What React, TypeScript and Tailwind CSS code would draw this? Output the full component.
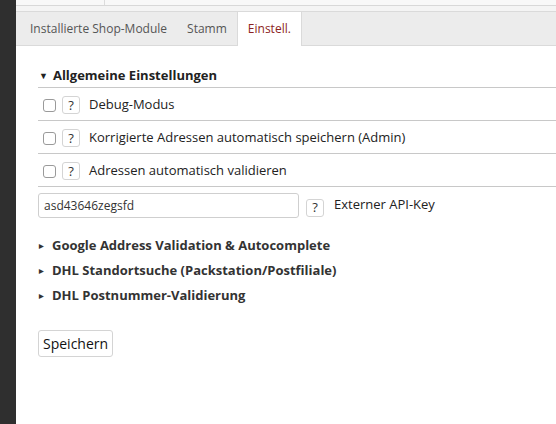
import { useState } from 'react';

type Row = { label: string };

const checkRows: Row[] = [
  { label: 'Debug-Modus' },
  { label: 'Korrigierte Adressen automatisch speichern (Admin)' },
  { label: 'Adressen automatisch validieren' },
];

const groups = [
  'Google Address Validation & Autocomplete',
  'DHL Standortsuche (Packstation/Postfiliale)',
  'DHL Postnummer-Validierung',
];

function HelpBox() {
  return (
    <span className="flex h-[18px] w-[18px] shrink-0 items-center justify-center rounded-[3px] border border-[#d4d4d4] bg-white text-[13px] leading-none text-[#333]">
      ?
    </span>
  );
}

export default function App() {
  const [apiKey, setApiKey] = useState('asd43646zegsfd');
  const tabs = ['Installierte Shop-Module', 'Stamm', 'Einstell.'];
  const active = 2;

  return (
    <div className="flex h-[424px] w-[556px] overflow-hidden bg-white font-['Open_Sans',sans-serif] text-[13px] text-[#222]">
      <div className="w-4 shrink-0 bg-[#2f2f2f]" />
      <div className="flex min-w-0 flex-1 flex-col">
        {/* top strip */}
        <div className="flex h-[6px] border-b border-[#d8d8d8] bg-[#f8f8f8]">
          <div className="w-[89px] border-r border-[#dcdcdc]" />
        </div>
        <div className="h-[5px] bg-[#f4f4f4]" />

        {/* tabs */}
        <div className="flex h-[35px] border-y border-[#dadada] bg-[#ececec] pl-[4px] text-[12px]">
          {tabs.map((t, i) => (
            <div
              key={t}
              className={
                i === active
                  ? 'relative -mb-px flex items-center border-x border-[#dadada] bg-white px-[10px] text-[#8c2323]'
                  : 'flex items-center px-[10px] text-[#555]'
              }
            >
              {t}
            </div>
          ))}
        </div>

        {/* content */}
        <div className="flex flex-col pl-[22px] pt-[19px]">
          <div className="flex h-[23px] items-center border-b border-[#c8c8c8] font-bold text-[#222]">
            <span className="ml-[1px] mr-[5px] text-[9px]">▼</span>
            Allgemeine Einstellungen
          </div>

          {checkRows.map((r) => (
            <div key={r.label} className="flex h-[33px] items-center border-b border-[#c8c8c8] pl-[5px] pt-[2px]">
              <span className="h-[13px] w-[13px] shrink-0 rounded-[3px] border border-[#9a9a9a] bg-white" />
              <span className="ml-[6px]">
                <HelpBox />
              </span>
              <span className="ml-[9px]">{r.label}</span>
            </div>
          ))}

          <div className="flex items-center pt-[6px]">
            <input
              value={apiKey}
              onChange={(e) => setApiKey(e.target.value)}
              className="h-[25px] w-[261px] rounded-[3px] border border-[#cfcfcf] bg-white px-[5px] text-[12px] text-[#333] outline-none"
            />
            <span className="ml-[7px] mt-[4px]">
              <HelpBox />
            </span>
            <span className="ml-[10px] -mt-[2px]">Externer API-Key</span>
          </div>

          <div className="mt-[19px] flex flex-col gap-[7px]">
            {groups.map((g) => (
              <div key={g} className="flex h-[18px] items-center font-bold text-[#333]">
                <span className="ml-[1px] mr-[8px] text-[6px]">▶</span>
                {g}
              </div>
            ))}
          </div>

          <div className="pt-[25px]">
            <button className="h-[27px] rounded-[3px] border border-[#d4d4d4] bg-white px-[4px] text-[14px] text-[#111]">
              Speichern
            </button>
          </div>
        </div>
      </div>
    </div>
  );
}
